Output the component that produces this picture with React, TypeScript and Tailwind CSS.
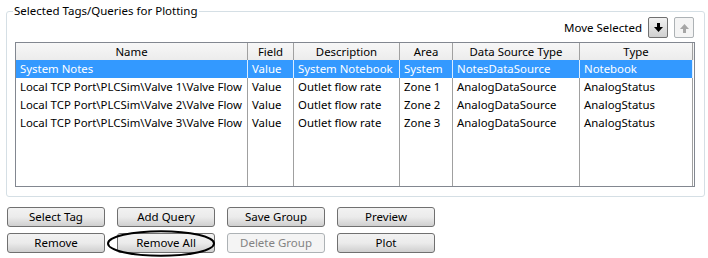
import React from 'react';

const columns = [
  { title: 'Name', width: 'w-[232px]' },
  { title: 'Field', width: 'w-[46px]' },
  { title: 'Description', width: 'w-[106px]' },
  { title: 'Area', width: 'w-[53px]' },
  { title: 'Data Source Type', width: 'w-[127px]' },
  { title: 'Type', width: 'w-[113px]' },
];

const rows = [
  ['System Notes', 'Value', 'System Notebook', 'System', 'NotesDataSource', 'Notebook'],
  ['Local TCP Port\\PLCSim\\Valve 1\\Valve Flow', 'Value', 'Outlet flow rate', 'Zone 1', 'AnalogDataSource', 'AnalogStatus'],
  ['Local TCP Port\\PLCSim\\Valve 2\\Valve Flow', 'Value', 'Outlet flow rate', 'Zone 2', 'AnalogDataSource', 'AnalogStatus'],
  ['Local TCP Port\\PLCSim\\Valve 3\\Valve Flow', 'Value', 'Outlet flow rate', 'Zone 3', 'AnalogDataSource', 'AnalogStatus'],
];

function WinButton({ label, disabled }: { label: string; disabled?: boolean }) {
  return (
    <button
      className={
        disabled
          ? 'w-[98px] h-[20px] rounded-[3px] border border-[#adb2b5] bg-[#f4f4f4] text-[#838383] leading-none'
          : 'w-[98px] h-[20px] rounded-[3px] border border-[#707070] bg-gradient-to-b from-[#f2f2f2] via-[#ebebeb] to-[#cfcfcf] text-black leading-none'
      }
    >
      {label}
    </button>
  );
}

function ArrowButton({ up, disabled }: { up?: boolean; disabled?: boolean }) {
  return (
    <button
      className={
        disabled
          ? 'w-[20px] h-[21px] rounded-[2px] border border-[#adb2b5] bg-[#f4f4f4] flex items-center justify-center'
          : 'w-[20px] h-[21px] rounded-[2px] border border-[#707070] bg-gradient-to-b from-[#f2f2f2] to-[#d0d0d0] flex items-center justify-center'
      }
    >
      <svg width="9" height="10" viewBox="0 0 9 10" className={up ? 'rotate-180' : ''}>
        <rect x="3" y="0" width="3" height="5" fill={disabled ? '#a6a6a6' : '#000'} />
        <polygon points="0,4 9,4 4.5,9" fill={disabled ? '#a6a6a6' : '#000'} />
      </svg>
    </button>
  );
}

export default function App() {
  return (
    <div className="w-[708px] h-[258px] bg-white text-[11.4px] text-black font-['Noto_Sans',sans-serif] pt-[4px]">
      <fieldset className="ml-[6px] w-[699px] border border-[#d5dfe5] rounded-[3px] pl-[6px] pr-[9px] pb-[9px]">
        <legend className="px-[1px] leading-[14px] text-[11.5px]">Selected Tags/Queries for Plotting</legend>
        <div className="pl-[2px]">
          <div className="flex justify-end items-center gap-[6px] pr-[1px] -mt-[1px]">
            <span className="text-[11.5px]">Move Selected</span>
            <ArrowButton />
            <ArrowButton up disabled />
          </div>
          <div className="mt-[4px] w-[680px] h-[145px] border border-[#828790] flex flex-col">
            <div className="flex h-[17px] bg-gradient-to-b from-[#f7f7f7] to-[#ececec]">
              {columns.map((c) => (
                <div key={c.title} className={`${c.width} border-r border-[#a0a0a0] text-center leading-[17px]`}>
                  {c.title}
                </div>
              ))}
            </div>
            {rows.map((r, i) => (
              <div key={i} className="flex h-[18px]">
                {r.map((cell, j) => (
                  <div
                    key={j}
                    className={
                      i === 0
                        ? `${columns[j].width} border-r border-[#d9ecff] bg-[#3399ff] text-white pl-[4px] leading-[18px] whitespace-nowrap overflow-hidden`
                        : `${columns[j].width} border-r border-[#a0a0a0] pl-[4px] leading-[18px] whitespace-nowrap overflow-hidden`
                    }
                  >
                    {cell}
                  </div>
                ))}
              </div>
            ))}
            <div className="flex flex-1">
              {columns.map((c) => (
                <div key={c.title} className={`${c.width} border-r border-[#a0a0a0]`} />
              ))}
            </div>
          </div>
        </div>
      </fieldset>
      <div className="pl-[7px] mt-[10px] flex flex-col gap-[6px] text-[11.5px]">
        <div className="flex gap-[12px]">
          <WinButton label="Select Tag" />
          <WinButton label="Add Query" />
          <WinButton label="Save Group" />
          <WinButton label="Preview" />
        </div>
        <div className="flex gap-[12px]">
          <WinButton label="Remove" />
          <div className="relative">
            <WinButton label="Remove All" />
            <svg className="absolute left-[-10px] top-[-3px]" width="110" height="27" viewBox="0 0 110 27">
              <ellipse cx="54" cy="13.5" rx="53" ry="12.3" fill="none" stroke="#000" strokeWidth="2" />
            </svg>
          </div>
          <WinButton label="Delete Group" disabled />
          <WinButton label="Plot" />
        </div>
      </div>
    </div>
  );
}
